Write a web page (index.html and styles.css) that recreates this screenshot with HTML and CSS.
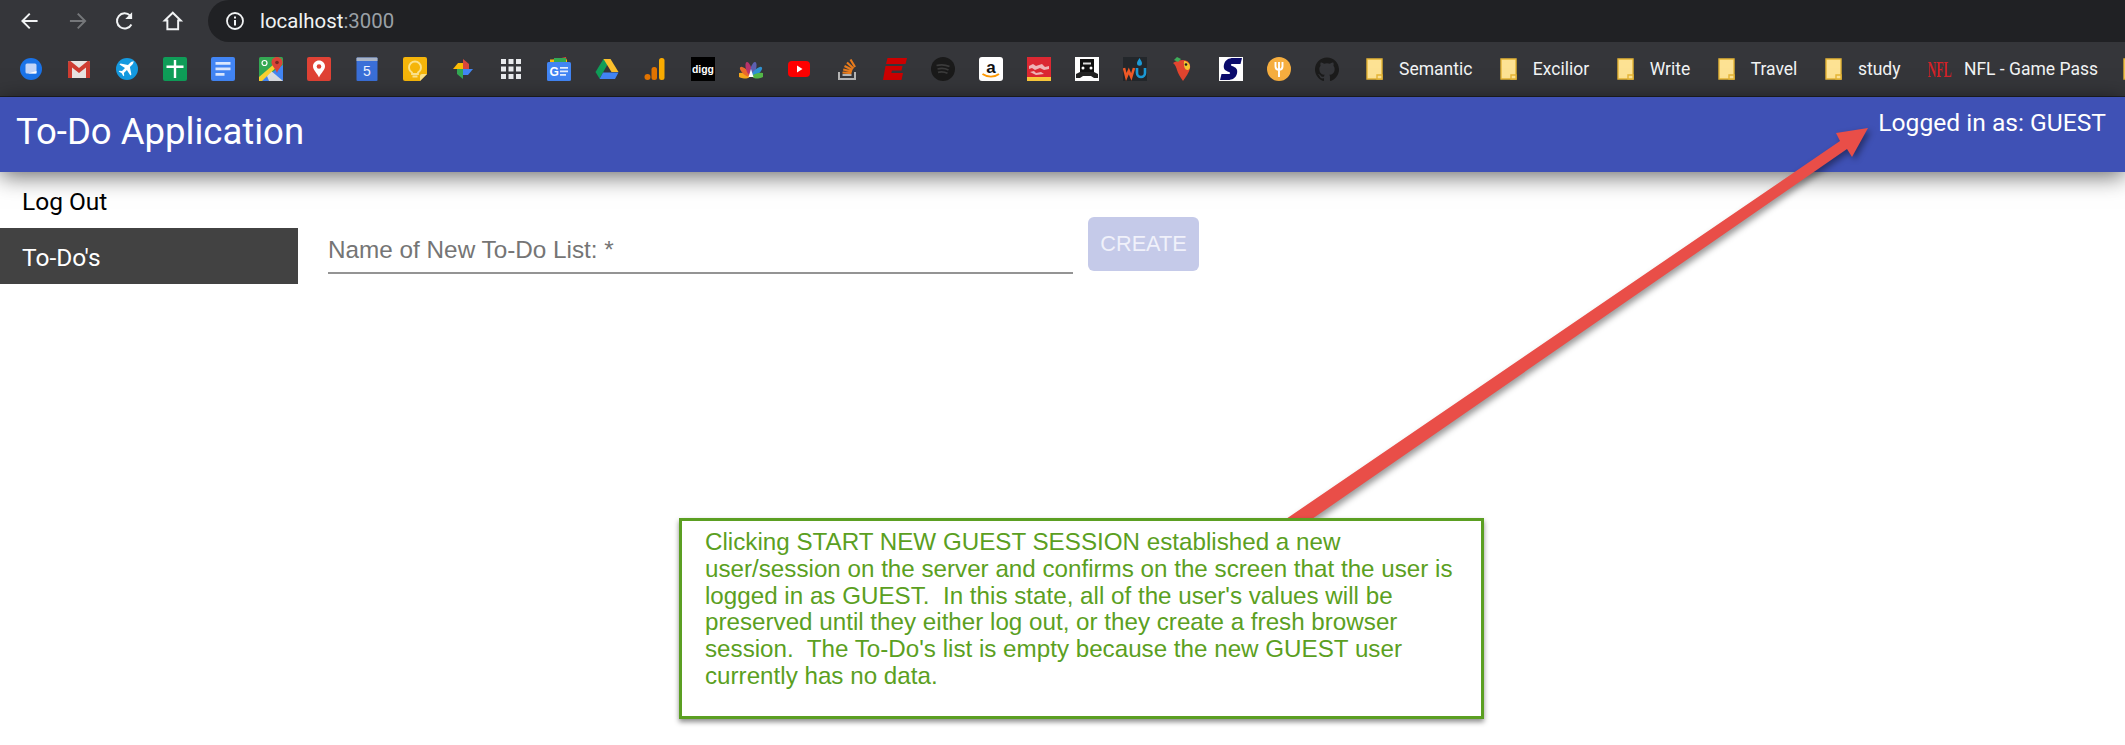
FILE: index.html
```html
<!DOCTYPE html>
<html lang="en">
<head>
    <meta charset="UTF-8">
    <title>To-Do Application</title>
    <link rel="stylesheet" href="styles.css">
</head>
<body>
    <svg class="defs" width="0" height="0">
        <symbol id="folder" viewBox="0 0 17 22">
            <path d="M1 1h15v20H1z" fill="#fde293" stroke="#e5b536" stroke-width="1.4"/>
            <path d="M11 21v-4h5v4z" fill="#fde293" stroke="#e5b536" stroke-width="1.4"/>
        </symbol>
    </svg>

    <div class="toolbar">
        <div class="nav">
            <svg class="nav-icon" viewBox="0 0 24 24"><path d="M20 12H5M12 4.500 4.500 12l7.500 7.500" fill="none" stroke="#f1f3f4" stroke-width="2"/></svg>
            <svg class="nav-icon" viewBox="0 0 24 24"><path d="M4 12h15M12 4.500l7.500 7.500-7.500 7.500" fill="none" stroke="#75777a" stroke-width="2"/></svg>
            <svg class="nav-icon" viewBox="0 0 24 24"><path d="M18.800 15.500A7.800 7.800 0 1 1 17.500 6.500" fill="none" stroke="#f1f3f4" stroke-width="2"/><path d="M19.500 3v7h-7z" fill="#f1f3f4"/></svg>
            <svg class="nav-icon" viewBox="0 0 24 24"><path d="M12 3.500 3.800 11.500h2.700V20.500h11V11.500h2.700z" fill="none" stroke="#f1f3f4" stroke-width="2"/></svg>
        </div>
        <div class="omnibox">
            <svg class="info-icon" viewBox="0 0 20 20"><circle cx="10" cy="10" r="8" fill="none" stroke="#f1f3f4" stroke-width="1.800"/><path d="M9 9h2v5.500H9zM9 5.500h2v2H9z" fill="#f1f3f4"/></svg>
            <span class="url">localhost<span class="port">:3000</span></span>
        </div>
    </div>

    <div class="bookmarks">
        <span class="fav"><svg viewBox="0 0 24 24"><circle cx="12" cy="12" r="11" fill="#1a73e8"/><rect x="6.500" y="6.500" width="11" height="10" rx="1.500" fill="#c3d5f8"/><path d="M9 16.500h8.500v-2.500z" fill="#fff"/></svg></span>
        <span class="fav"><svg viewBox="0 0 24 24"><rect x="1" y="4" width="22" height="17" rx="1.500" fill="#e8e4e2"/><path d="M1 21V5.500C1 4 3 3.600 4 4.500L12 11l8-6.500c1-.9 3-.5 3 1V21h-4V10.500L12 16 5 10.500V21z" fill="#cf3d32"/></svg></span>
        <span class="fav"><svg viewBox="0 0 24 24"><circle cx="12" cy="12" r="11" fill="#159ae0"/><path d="M19 5c-1-1-2.500-.5-3.500.500l-2.500 2.500-7.500-1.500-1 1 5.500 3.500-3 3-2.500-.3-.8.800 3 1.700 1.700 3 .8-.8-.3-2.500 3-3 3.500 5.500 1-1-1.500-7.500 2.500-2.500c1-1 1.500-2.300.6-3.400z" fill="#fff"/></svg></span>
        <span class="fav"><svg viewBox="0 0 24 24"><rect width="24" height="24" rx="2" fill="#0f9d58"/><path d="M10.800 3h2.400v18h-2.400zM3.500 8.500h17v2.400h-17z" fill="#fff"/></svg></span>
        <span class="fav"><svg viewBox="0 0 24 24"><rect width="24" height="24" rx="2" fill="#4285f4"/><path d="M4.500 5h15v2.800h-15zM4.500 10.500h15v2.800h-15zM4.500 16h9v2.800h-9z" fill="#d9e6fd"/></svg></span>
        <span class="fav"><svg viewBox="0 0 24 24"><rect width="24" height="24" rx="1.500" fill="#34a853"/><path d="M0 24 24 8v16z" fill="#4285f4"/><path d="M11 13 24 24H10l-2-5z" fill="#dadce0"/><path d="M0 20 14 8l3 2.500L3 24H0z" fill="#fbd12f"/><path d="M18 0c3.200 0 5.500 2.300 5.500 5.300C23.500 9 20 10.500 18 16c-2-5.500-5.500-7-5.500-10.700C12.500 2.300 14.800 0 18 0z" fill="#db4437"/><circle cx="18" cy="5.500" r="1.800" fill="#7a2a22"/><circle cx="5.500" cy="6" r="2.500" fill="none" stroke="#fff" stroke-width="1.200"/></svg></span>
        <span class="fav"><svg viewBox="0 0 24 24"><rect width="24" height="24" rx="2" fill="#e04235"/><path d="M12 3.500c3.300 0 6 2.500 6 5.800 0 4-4 6.500-6 11.200-2-4.700-6-7.200-6-11.200 0-3.300 2.700-5.800 6-5.800z" fill="#fff"/><circle cx="12" cy="9.500" r="2.300" fill="#e04235"/></svg></span>
        <span class="fav"><svg viewBox="0 0 24 24"><path d="M1.500 1.500q0-1 1-1h19q1 0 1 1V23q0 1-1 1h-19q-1 0-1-1z" fill="#3a6fd8"/><path d="M1.500 1.500q0-1 1-1h19q1 0 1 1V4h-21z" fill="#a9b4c6"/><text class="fav-text plain" x="12" y="19" text-anchor="middle" font-size="14" fill="#eef3ff">5</text></svg></span>
        <span class="fav"><svg viewBox="0 0 24 24"><path d="M0 2q0-2 2-2h20q2 0 2 2v15l-7 7H2q-2 0-2-2z" fill="#f5b50a"/><path d="M24 17h-5q-2 0-2 2v5z" fill="#fbe28d"/><path d="M9 15.500c-1.500-1-3-2.500-3-5a6 6 0 1 1 12 0c0 2.500-1.500 4-3 5v1.500H9zM9.500 19.500h5" fill="none" stroke="#fbe28d" stroke-width="1.800"/></svg></span>
        <span class="fav"><svg viewBox="0 0 24 24"><path d="M12 12V2l6 5v5z" fill="#d9473c"/><path d="M12 12h10l-5 6h-5z" fill="#4285f4"/><path d="M12 12v10l-6-5v-5z" fill="#34a853"/><path d="M12 12H2l5-6h5z" fill="#fbbc05"/></svg></span>
        <span class="fav"><svg viewBox="0 0 24 24"><path d="M2 2h5v5H2zM9.500 2h5v5h-5zM17 2h5v5h-5zM2 9.500h5v5H2zM9.500 9.500h5v5h-5zM17 9.500h5v5h-5zM2 17h5v5H2zM9.500 17h5v5h-5zM17 17h5v5h-5z" fill="#e8eaed"/></svg></span>
        <span class="fav"><svg viewBox="0 0 24 24"><path d="M5 3l14-3 1 6H5z" fill="#ea4335"/><path d="M3 2.500h17v4H3z" fill="#fbbc05"/><path d="M7 1h12v4H7z" fill="#34a853"/><rect y="5" width="24" height="19" rx="1.500" fill="#4285f4"/><text class="fav-text" x="2.500" y="19" font-size="12" fill="#fff">G</text><path d="M13 10h8v1.800h-8zM13 13.500h8v1.800h-8zM13 17h6v1.800h-6z" fill="#e3edfd"/></svg></span>
        <span class="fav"><svg viewBox="0 0 24 24"><path d="M8.500 2h7L8 15.500l-3.500 6L.5 15z" fill="#0f9d58"/><path d="M15.500 2 23.500 15h-7L8.500 2z" fill="#fbc02d"/><path d="M8 15.500h15.500L20 22H4.500z" fill="#4285f4"/></svg></span>
        <span class="fav"><svg viewBox="0 0 24 24"><rect x="16" y="1" width="5.500" height="22" rx="2.500" fill="#f9ab00"/><rect x="8.500" y="10" width="5.500" height="13" rx="2.500" fill="#e37400"/><circle cx="4.500" cy="20" r="3" fill="#e37400"/></svg></span>
        <span class="fav"><svg viewBox="0 0 24 24"><rect width="24" height="24" fill="#000"/><text class="fav-text" x="1" y="15.500" font-size="10.500" textLength="22" lengthAdjust="spacingAndGlyphs" fill="#fff">digg</text></svg></span>
        <span class="fav"><svg viewBox="0 0 24 24"><g transform="translate(12 20)"><ellipse cx="0" cy="-8" rx="2.700" ry="6.500" fill="#f6a81c" transform="rotate(-80)"/><ellipse cx="0" cy="-8" rx="2.700" ry="6.500" fill="#ec6a2c" transform="rotate(-48)"/><ellipse cx="0" cy="-8.500" rx="2.700" ry="7" fill="#b8336a" transform="rotate(-16)"/><ellipse cx="0" cy="-8.500" rx="2.700" ry="7" fill="#5d5fb0" transform="rotate(16)"/><ellipse cx="0" cy="-8" rx="2.700" ry="6.500" fill="#2f93d2" transform="rotate(48)"/><ellipse cx="0" cy="-8" rx="2.700" ry="6.500" fill="#55b848" transform="rotate(80)"/></g><path d="M9.500 20 12 12l2.500 8z" fill="#fff"/></svg></span>
        <span class="fav"><svg viewBox="0 0 24 24"><rect x="1" y="4" width="22" height="16" rx="4" fill="#f00"/><path d="M10 8.500v7l5.500-3.500z" fill="#fff"/></svg></span>
        <span class="fav"><svg viewBox="0 0 24 24"><path d="M4 15v7h16v-7" fill="none" stroke="#b5b5b5" stroke-width="2"/><path d="M7.500 18h9" stroke="#b5b5b5" stroke-width="2"/><path d="M7.500 15.500l9 .7M8.200 12.500l8.800 2M9.500 9l8 4M12 5.500l6.500 6M15.500 2.500l4.500 7.500" stroke="#e87b1c" stroke-width="2.200"/></svg></span>
        <span class="fav"><svg viewBox="0 0 24 24"><path d="M4.500 1H24l-1.500 6H3zM2.500 9h17l-1 4.500H9l-.7 2.500H20l-1.500 7H0z" fill="#cc0000"/></svg></span>
        <span class="fav"><svg viewBox="0 0 24 24"><circle cx="12" cy="12" r="12" fill="#1a1a1a"/><path d="M5.500 8.500c4.500-1.200 9-.8 13 1M6.500 12c4-1 7.500-.7 11 1M7 15.300c3.500-.8 6.500-.5 9.500 1" fill="none" stroke="#3b3b3b" stroke-width="1.800"/></svg></span>
        <span class="fav"><svg viewBox="0 0 24 24"><rect width="24" height="24" rx="3" fill="#fff"/><text class="fav-text" x="12" y="15.500" text-anchor="middle" font-size="17" fill="#111">a</text><path d="M3.500 17c5 3.500 12 3.500 16.500 0" fill="none" stroke="#f90" stroke-width="1.800"/></svg></span>
        <span class="fav"><svg viewBox="0 0 24 24"><rect width="24" height="20" fill="#dc2832"/><rect y="20" width="24" height="4" fill="#fcc93c"/><path d="M2 9l4-2 3 2 6-2 3 3 4-1v3l-5 1-4-2-5 2-3-2-3 1zM3 15l4-1 2 2 5-1 3 2-8 1z" fill="#efb4b6"/></svg></span>
        <span class="fav"><svg viewBox="0 0 24 24"><rect width="24" height="24" fill="#fff"/><path d="M5 2h14v13H5z" fill="#111"/><path d="M8 5.500h8v2H8z" fill="#ddd"/><path d="M1 17l4-2h14l4 2v4h-4l-3-2H8l-3 2H1z" fill="#222"/><circle cx="8" cy="11" r="1.500" fill="#fff"/><circle cx="16" cy="11" r="1.500" fill="#fff"/></svg></span>
        <span class="fav"><svg viewBox="0 0 24 24"><rect width="24" height="24" fill="#23272b"/><path d="M16.500 1c1.500 2.500 2.500 3.800 2.500 5.300a2.500 2.500 0 0 1-5 0c0-1.500 1-2.800 2.500-5.300z" fill="#1c9ad6"/><path d="M1 11l2.300 9 2.500-6 2.500 6L11 11" fill="none" stroke="#ef5a28" stroke-width="2.600"/><path d="M14 11v5a4 4 0 0 0 8 0v-5" fill="none" stroke="#1c9ad6" stroke-width="2.600"/></svg></span>
        <span class="fav"><svg viewBox="0 0 24 24"><path d="M12 3c5 0 8 3.500 7 8.500-.7 3.500-4 8-7 12.500-2.500-4-5-7-6-11-.8-3-1.500-5-4-7 3-2 6-3 10-3z" fill="#e2452f"/><path d="M13 4c3 0 6 2.500 6 6 0 1.500-1 3-2.500 3-2.500 0-4-3-3.500-9z" fill="#f4c430"/><path d="M3 3l3-3 4 2-3 3z" fill="#3fae5a"/><circle cx="15" cy="7.500" r="1.300" fill="#222"/></svg></span>
        <span class="fav"><svg viewBox="0 0 24 24"><rect width="24" height="24" fill="#fff"/><path d="M23 1 21.500 7H13c-1.500 0-1.500 1.500 0 2 4 1.500 6 3 5 7.500C17 21 13 23 9 23H1l1.500-6H10c1.500 0 1.500-1.500 0-2-4-1.500-6-3-5-7.500C6 3 10 1 14 1z" fill="#0b0b6b"/></svg></span>
        <span class="fav"><svg viewBox="0 0 24 24"><circle cx="12" cy="12" r="12" fill="#f6ae3f"/><path d="M8.500 5v4.500c0 2.200 1.500 3.300 3.500 3.300s3.500-1.100 3.500-3.300V5M12 5v15" fill="none" stroke="#fff" stroke-width="1.900"/></svg></span>
        <span class="fav"><svg viewBox="0 0 24 24"><path d="M12 .5C5.370.5 0 5.870 0 12.500c0 5.300 3.440 9.800 8.200 11.390.6.110.82-.26.82-.58v-2.030c-3.340.73-4.040-1.610-4.040-1.610-.55-1.390-1.340-1.760-1.340-1.760-1.090-.75.08-.73.08-.73 1.200.08 1.840 1.240 1.840 1.240 1.070 1.830 2.810 1.300 3.500 1 .1-.78.42-1.310.76-1.610-2.670-.3-5.470-1.330-5.470-5.930 0-1.310.47-2.380 1.240-3.220-.13-.3-.54-1.520.12-3.180 0 0 1-.32 3.300 1.230a11.500 11.500 0 0 1 6 0c2.280-1.550 3.290-1.230 3.290-1.230.66 1.660.25 2.880.12 3.180.77.84 1.230 1.910 1.230 3.220 0 4.610-2.800 5.630-5.480 5.920.43.37.81 1.100.81 2.220v3.290c0 .32.22.7.83.58C20.570 22.290 24 17.800 24 12.500 24 5.870 18.630.5 12 .5z" fill="#1b1b1b"/></svg></span>

        <span class="mark first"><svg class="folder"><use href="#folder"/></svg>Semantic</span>
        <span class="mark"><svg class="folder"><use href="#folder"/></svg>Excilior</span>
        <span class="mark"><svg class="folder"><use href="#folder"/></svg>Write</span>
        <span class="mark"><svg class="folder"><use href="#folder"/></svg>Travel</span>
        <span class="mark"><svg class="folder"><use href="#folder"/></svg>study</span>
        <span class="mark last"><span class="nfl">NFL</span>NFL - Game Pass</span>
        <svg class="folder"><use href="#folder"/></svg>
    </div>

    <header class="appbar">
        <div class="app-title">To-Do Application</div>
        <div class="login-state">Logged in as: GUEST</div>
    </header>

    <div class="main">
        <nav class="sidebar">
            <div class="side-item">Log Out</div>
            <div class="side-item active">To-Do's</div>
        </nav>
        <div class="content">
            <div class="new-list">
                <div class="field">Name of New To-Do List: *</div>
                <button class="create-btn" disabled>CREATE</button>
            </div>
        </div>
    </div>

    <!-- annotation layered over the screenshot -->
    <svg class="arrow" width="2125" height="745">
        <polygon points="1286,519 1840,141 1836,133 1868,128 1852,157 1847,149 1312,519" fill="#e94e48"/>
    </svg>
    <div class="callout">Clicking START NEW GUEST SESSION established a new<br>user/session on the server and confirms on the screen that the user is<br>logged in as GUEST.  In this state, all of the user's values will be<br>preserved until they either log out, or they create a fresh browser<br>session.  The To-Do's list is empty because the new GUEST user<br>currently has no data.</div>
</body>
</html>
```

FILE: styles.css
```css
html, body {
    margin: 0;
    height: 745px;
    overflow: hidden;
    background: white;
}

body {
    position: relative;
    font-family: Roboto, sans-serif;
}

.defs {
    position: absolute;
}

/* browser chrome */
.toolbar {
    height: 42px;
    background: #35363a;
    display: flex;
}

.nav {
    width: 208px;
    padding-left: 18px;
    box-sizing: border-box;
    display: flex;
}

.nav-icon {
    width: 24px;
    height: 24px;
    margin: 9px 24px 0 0;
}

.omnibox {
    flex: 1;
    background: #202124;
    border-radius: 21px 0 0 21px;
    display: flex;
    align-items: center;
    padding-left: 17px;
    color: #f1f3f4;
}

.info-icon {
    width: 20px;
    height: 20px;
    margin-right: 15px;
}

.url {
    font-size: 20.400px;
}

.port {
    color: #9aa0a6;
}

.bookmarks {
    height: 54px;
    background: #35363a;
    border-bottom: 1px solid #202124;
    display: flex;
    align-items: center;
    padding-left: 7px;
    color: #f1f3f4;
    font-size: 17.500px;
    white-space: nowrap;
    overflow: hidden;
}

.fav {
    width: 48px;
    height: 24px;
    flex: none;
    display: flex;
    justify-content: center;
}

.fav svg {
    width: 24px;
    height: 24px;
}

.fav-text {
    font-family: "Liberation Sans", sans-serif;
    font-weight: bold;
}

.fav-text.plain {
    font-weight: normal;
}

.mark {
    display: flex;
    align-items: center;
    flex: none;
    margin-right: 27.500px;
}

.mark.first {
    margin-left: 15px;
}

.mark.last {
    margin-right: 25px;
}

.folder {
    width: 17px;
    height: 22px;
    margin-right: 16px;
    flex: none;
}

.nfl {
    width: 24px;
    margin-right: 12px;
    font-family: "Liberation Serif", serif;
    font-weight: bold;
    font-size: 24px;
    line-height: 24px;
    color: #d2232a;
    transform: scaleX(0.5);
    transform-origin: left center;
}

/* app */
.appbar {
    height: 75px;
    background: #3f51b5;
    color: white;
    display: flex;
    justify-content: space-between;
    position: relative;
    box-shadow: 0 4px 22px rgba(0,0,0,0.6);
}

.app-title {
    font-size: 36.500px;
    line-height: 70px;
    padding-left: 16px;
}

.login-state {
    font-size: 24.600px;
    line-height: 52px;
    padding-right: 19px;
}

.main {
    display: flex;
}

.sidebar {
    width: 298px;
}

.side-item {
    height: 56px;
    line-height: 60px;
    padding-left: 22px;
    font-size: 24.500px;
    color: black;
}

.side-item.active {
    background: #424242;
    color: white;
}

.content {
    padding: 45px 0 0 30px;
}

.new-list {
    display: flex;
    align-items: flex-start;
    gap: 15px;
}

.field {
    width: 745px;
    height: 57px;
    box-sizing: border-box;
    border-bottom: 2px solid #949494;
    font-family: "Liberation Sans", sans-serif;
    font-size: 24.300px;
    line-height: 66px;
    color: #757575;
}

.create-btn {
    width: 111px;
    height: 54px;
    background: #c5cae9;
    border: none;
    border-radius: 6px;
    color: #f0f1fa;
    font-family: "Liberation Sans", sans-serif;
    font-size: 21.700px;
    padding: 0;
}

/* annotation */
.arrow {
    position: absolute;
    left: 0;
    top: 0;
    filter: drop-shadow(3px 3px 3px rgba(0,0,0,0.4));
}

.callout {
    position: absolute;
    left: 679px;
    top: 518px;
    width: 805px;
    height: 201px;
    box-sizing: border-box;
    border: 3px solid #5b9f22;
    background: white;
    box-shadow: 0 3px 5px rgba(0,0,0,0.45);
    padding: 8px 0 0 23px;
    color: #5b9f22;
    font-family: "Liberation Sans", sans-serif;
    font-size: 24.200px;
    line-height: 26.800px;
    white-space: pre-wrap;
}
```
